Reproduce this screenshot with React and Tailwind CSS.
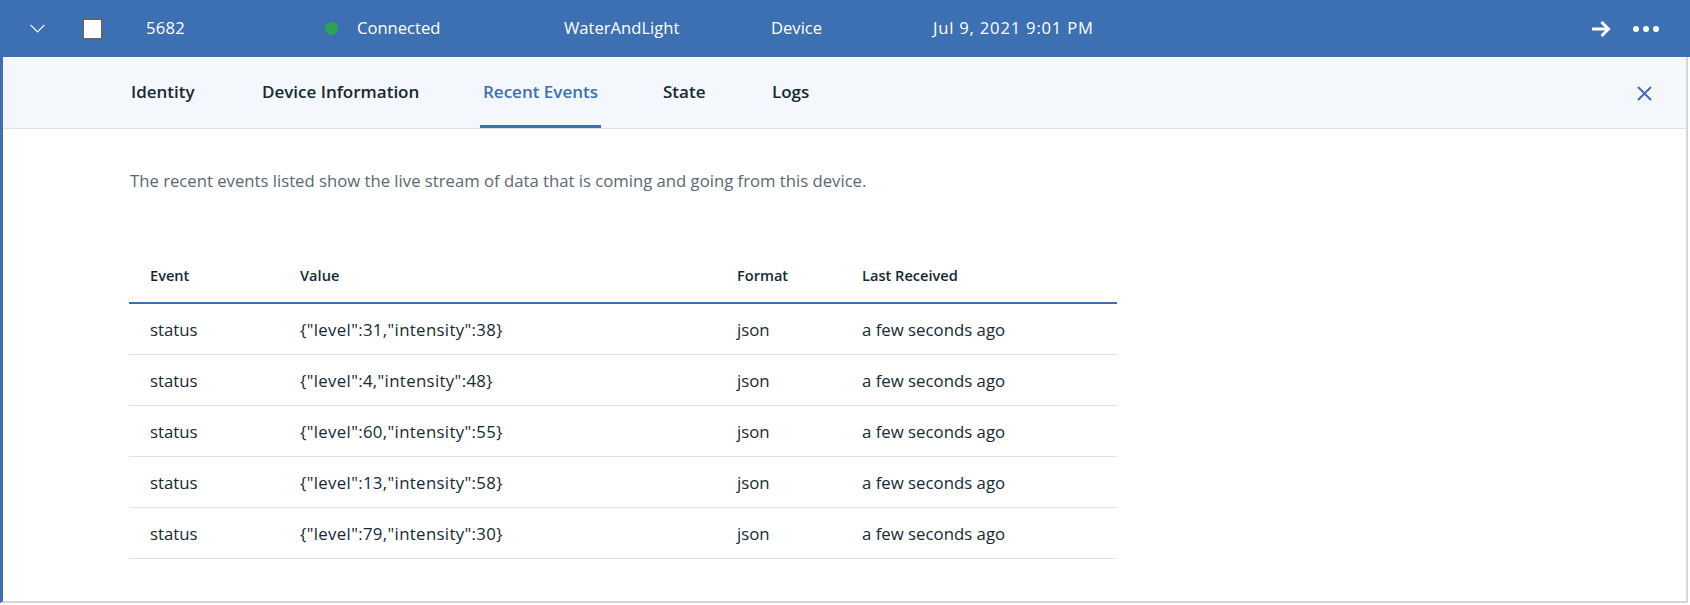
import React, { useState } from "react";

const events = [
  { event: "status", value: '{"level":31,"intensity":38}', format: "json", received: "a few seconds ago" },
  { event: "status", value: '{"level":4,"intensity":48}', format: "json", received: "a few seconds ago" },
  { event: "status", value: '{"level":60,"intensity":55}', format: "json", received: "a few seconds ago" },
  { event: "status", value: '{"level":13,"intensity":58}', format: "json", received: "a few seconds ago" },
  { event: "status", value: '{"level":79,"intensity":30}', format: "json", received: "a few seconds ago" },
];

const tabs = [
  { label: "Identity", w: "w-[131px]" },
  { label: "Device Information", w: "w-[221px]" },
  { label: "Recent Events", w: "w-[180px]" },
  { label: "State", w: "w-[109px]" },
  { label: "Logs", w: "w-[100px]" },
];

const App = () => {
  const [active, setActive] = useState("Recent Events");

  return (
    <div className="w-full h-[605px] bg-white font-['Open_Sans',sans-serif] text-[#152935] overflow-hidden">
      {/* device row */}
      <div className="flex items-center h-[57px] bg-[#3d70b2] text-white text-[16.6px] pl-[30px] pr-[31px]">
        <div className="w-[52px] flex items-center">
          <svg width="15" height="9" viewBox="0 0 15 9" fill="none">
            <path d="M0.5 0.8 L7.5 7.8 L14.5 0.8" stroke="white" strokeWidth="1.2" />
          </svg>
        </div>
        <div className="w-[64px] flex items-center">
          <div className="w-[21px] h-[22px] bg-white border-2 border-[#5a6872]" />
        </div>
        <div className="w-[179px] tracking-[0.3px]">5682</div>
        <div className="w-[32px] flex items-center">
          <span className="w-[13px] h-[13px] rounded-full bg-[#2ea44f] block" />
        </div>
        <div className="w-[207px]">Connected</div>
        <div className="w-[207px]">WaterAndLight</div>
        <div className="w-[162px]">Device</div>
        <div className="flex-1 tracking-[0.8px]">Jul 9, 2021 9:01 PM</div>
        <svg width="20" height="18" viewBox="0 0 20 18" fill="none">
          <path d="M1 9 H17.5" stroke="white" strokeWidth="3" />
          <path d="M10.5 2 L17.5 9 L10.5 16" stroke="white" strokeWidth="3" />
        </svg>
        <div className="flex gap-[4px] ml-[22px]">
          <span className="w-[6px] h-[6px] rounded-full bg-white block" />
          <span className="w-[6px] h-[6px] rounded-full bg-white block" />
          <span className="w-[6px] h-[6px] rounded-full bg-white block" />
        </div>
      </div>

      {/* expanded panel */}
      <div className="h-[546px] border-l-[3px] border-l-[#3d70b2] border-r-2 border-r-[#d6d6d6] border-b-2 border-b-[#d6d6d6] mr-[2px]">
        <div className="flex h-[72px] bg-[#f4f7fb] border-b border-[#dfe3e6] pl-[125px] pr-[34px]">
          {tabs.map((t) => (
            <div key={t.label} className={`${t.w} h-full flex`}>
              <button
                onClick={() => setActive(t.label)}
                className={`h-full px-[3px] pt-[1px] flex items-center text-[17px] font-semibold border-b-[3px] ${
                  active === t.label
                    ? "text-[#3d70b2] border-[#3d70b2]"
                    : "text-[#152935] border-transparent"
                }`}
              >
                {t.label}
              </button>
            </div>
          ))}
          <div className="ml-auto flex items-center pt-[1px]">
            <svg width="15" height="15" viewBox="0 0 15 15" fill="none">
              <path d="M1 1 L14 14 M14 1 L1 14" stroke="#3d70b2" strokeWidth="2" />
            </svg>
          </div>
        </div>

        <div className="pl-[126px] pt-[40px]">
          <p className="pl-[1px] text-[16.7px] leading-[24px] text-[#5a6872]">
            The recent events listed show the live stream of data that is coming and going from this device.
          </p>

          <div className="w-[988px] mt-[55px]">
            <div className="flex items-end h-[56px] pb-[17px] border-b-2 border-[#3d70b2] text-[14.6px] leading-[20px] font-semibold">
              <div className="w-[150px] pl-[21px]">Event</div>
              <div className="w-[437px] pl-[21px]">Value</div>
              <div className="w-[125px] pl-[21px]">Format</div>
              <div className="flex-1 pl-[21px]">Last Received</div>
            </div>
            {events.map((e, i) => (
              <div key={i} className="flex items-center h-[51px] pt-[1px] border-b border-[#dfe3e6] text-[16.8px]">
                <div className="w-[150px] pl-[21px]">{e.event}</div>
                <div className="w-[437px] pl-[21px] tracking-[0.35px]">{e.value}</div>
                <div className="w-[125px] pl-[21px]">{e.format}</div>
                <div className="flex-1 pl-[21px]">{e.received}</div>
              </div>
            ))}
          </div>
        </div>
      </div>
    </div>
  );
};

export default App;
